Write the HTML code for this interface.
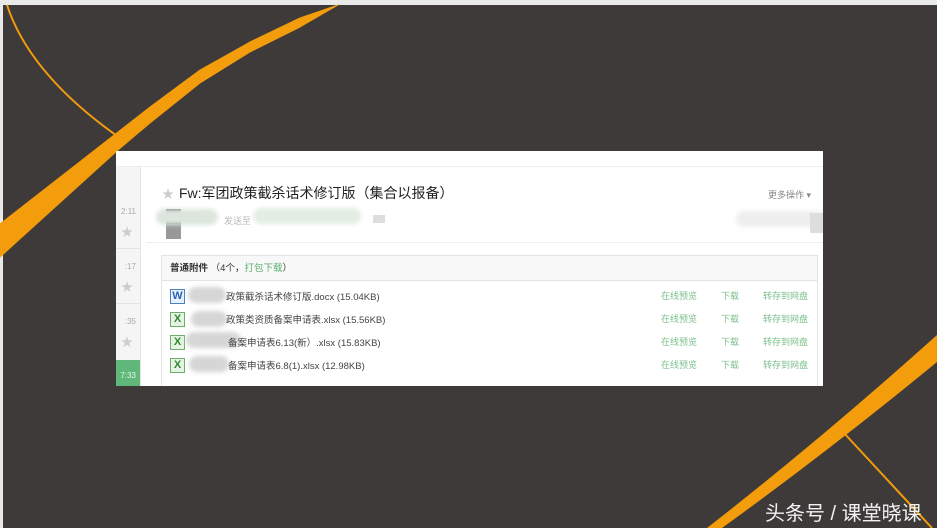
<!DOCTYPE html>
<html><head><meta charset="utf-8"><style>
body{margin:0;width:937px;height:528px;overflow:hidden;background:#e9e9e9;font-family:"Liberation Sans","Noto Sans CJK SC",sans-serif;}
#bg{position:absolute;left:3px;top:5px;width:934px;height:523px;background:#3e3a39;}
svg{position:absolute;left:0;top:0}
.card{position:absolute;left:116px;top:151px;width:707px;height:235px;background:#fff;overflow:hidden}
.abs{position:absolute}
.g{color:#5bb071}
.side{position:absolute;left:0;top:16px;width:24px;height:219px;background:#f5f5f5;border-right:1px solid #e6e6e6}
.tm{position:absolute;right:4px;font-size:8px;color:#aaa}
.st{position:absolute;left:5px;font-size:12px;color:#ccc}
.blur{position:absolute;background:#d6d6d6;border-radius:12px;filter:blur(2px)}
.row{position:absolute;left:52px;font-size:9.5px;color:#444;white-space:nowrap}
.ic{position:absolute;left:54px;width:13px;height:13px;font-size:11px;font-weight:bold;text-align:center;line-height:13px}
.w{border:1px solid #4a7fc1;color:#2a64b8;background:#e8f0fb}
.x{border:1px solid #6dae6a;color:#2e8a2e;background:#e6f3e4}
.lk{position:absolute;font-size:9px;color:#7cbf8c}
</style></head><body>
<div id="bg"></div>
<svg width="937" height="528">
<path d="M0,224 L118,132 L150,107 L200,70 L250,42 L300,18 L338,5 L300,27 L250,52 L200,83 L150,123 L118,150 L0,257 Z" fill="#f39c0c" stroke="#f39c0c" stroke-width="1" stroke-linejoin="round"/>
<path d="M7,5 Q30,75 120,138" stroke="#f39c0c" stroke-width="2" fill="none"/>
<path d="M707,528 Q820,440 937,335 L937,362 Q830,450 722,528 Z" fill="#f39c0c"/>
<path d="M843,432 L932,528" stroke="#f39c0c" stroke-width="2" fill="none"/>
</svg>
<div class="card">
<div class="abs" style="left:0;top:15px;width:707px;height:1px;background:#eee"></div>
<div class="side">
<div class="tm" style="top:40px">2:11</div><div class="st" style="top:56px">★</div>
<div class="abs" style="left:0;top:81px;width:24px;height:1px;background:#e3e3e3"></div>
<div class="tm" style="top:95px">:17</div><div class="st" style="top:111px">★</div>
<div class="abs" style="left:0;top:136px;width:24px;height:1px;background:#e3e3e3"></div>
<div class="tm" style="top:150px">:35</div><div class="st" style="top:166px">★</div>
<div class="abs" style="left:0;top:193px;width:24px;height:26px;background:#5fb77a"></div>
<div class="tm" style="top:204px;color:#e6f5ea">7:33</div>
</div>
<div class="abs" style="left:46px;top:34px;font-size:12px;color:#ccc">★</div>
<div class="abs" style="left:63px;top:32px;font-size:14px;color:#222;white-space:nowrap">Fw:军团政策截杀话术修订版（集合以报备）</div>
<div class="abs" style="left:50px;top:58px;width:15px;height:30px;background:#5a5a5a"></div>
<div class="abs" style="left:50px;top:73px;width:15px;height:15px;background:#999"></div>
<div class="blur" style="left:40px;top:58px;width:62px;height:16px;background:#dce6dd"></div>
<div class="abs" style="left:108px;top:63px;font-size:9px;color:#bbb">发送至</div>
<div class="blur" style="left:137px;top:57px;width:108px;height:16px;background:#e2ede4"></div>
<div class="abs" style="left:257px;top:64px;width:12px;height:8px;background:#ddd"></div>
<div class="abs" style="right:12px;top:37px;font-size:9px;color:#888">更多操作 ▾</div>
<div class="blur" style="left:620px;top:60px;width:90px;height:16px;background:#eee"></div>
<div class="abs" style="left:694px;top:62px;width:13px;height:20px;background:#ddd"></div>
<div class="abs" style="left:30px;top:91px;width:677px;height:1px;background:#eee"></div>
<div class="abs" style="left:45px;top:104px;width:655px;height:131px;border:1px solid #e3e3e3"></div>
<div class="abs" style="left:46px;top:105px;width:655px;height:24px;background:#f8f8f8;border-bottom:1px solid #e3e3e3"></div>
<div class="abs" style="left:54px;top:109px;font-size:9.5px;color:#333"><b>普通附件</b> （4个，<span class="g">打包下载</span>）</div>
<div class="ic w" style="top:138px">W</div><div class="ic x" style="top:161px">X</div><div class="ic x" style="top:184px">X</div><div class="ic x" style="top:207px">X</div>
<div class="blur" style="left:72px;top:136px;width:38px;height:16px"></div>
<div class="blur" style="left:75px;top:160px;width:36px;height:16px"></div>
<div class="blur" style="left:70px;top:181px;width:55px;height:16px"></div>
<div class="blur" style="left:73px;top:205px;width:40px;height:16px"></div>
<div class="row" style="left:110px;top:138px">政策截杀话术修订版.docx (15.04KB)</div>
<div class="row" style="left:110px;top:161px">政策类资质备案申请表.xlsx (15.56KB)</div>
<div class="row" style="left:112px;top:184px">备案申请表6.13(新）.xlsx (15.83KB)</div>
<div class="row" style="left:112px;top:207px">备案申请表6.8(1).xlsx (12.98KB)</div>
<div class="lk" style="left:545px;top:138px">在线预览</div><div class="lk" style="left:605px;top:138px">下载</div><div class="lk" style="left:647px;top:138px">转存到网盘</div>
<div class="lk" style="left:545px;top:161px">在线预览</div><div class="lk" style="left:605px;top:161px">下载</div><div class="lk" style="left:647px;top:161px">转存到网盘</div>
<div class="lk" style="left:545px;top:184px">在线预览</div><div class="lk" style="left:605px;top:184px">下载</div><div class="lk" style="left:647px;top:184px">转存到网盘</div>
<div class="lk" style="left:545px;top:207px">在线预览</div><div class="lk" style="left:605px;top:207px">下载</div><div class="lk" style="left:647px;top:207px">转存到网盘</div>
</div>
<div class="abs" style="left:765px;top:497px;font-size:20px;color:#f2f2f2;white-space:nowrap">头条号 / 课堂晓课</div>
</body></html>
